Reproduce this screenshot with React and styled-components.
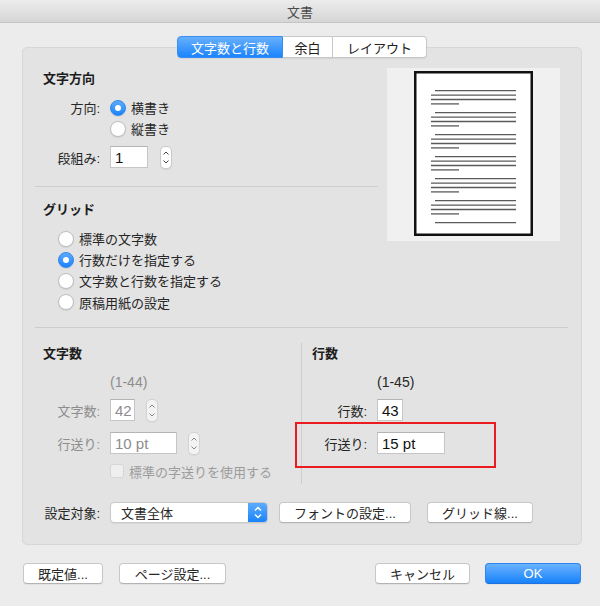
import React from "react";
import styled, { createGlobalStyle } from "styled-components";

const GlobalStyle = createGlobalStyle`
  html, body {
    margin: 0;
    padding: 0;
    background: #ececec;
  }
  body {
    font-family: "Liberation Sans", "Noto Sans CJK JP", sans-serif;
    font-size: 13px;
    color: #262626;
  }
`;

const Window = styled.div`
  width: 600px;
  height: 606px;
  background: #ececec;
  overflow: hidden;
  display: flex;
  flex-direction: column;
`;

const TitleBar = styled.div`
  height: 22px;
  border-bottom: 1px solid #c4c4c4;
  background: linear-gradient(#ececec, #d6d6d6);
  display: flex;
  align-items: center;
  justify-content: center;
  font-size: 13px;
  color: #4b4b4b;
`;

const Content = styled.div`
  padding: 13px 18px 0 22px;
  display: flex;
  flex-direction: column;
`;

const TabRow = styled.div`
  display: flex;
  justify-content: center;
  margin-bottom: -11px;
  position: relative;
  z-index: 1;
`;

const Tab = styled.div`
  width: ${(p) => p.w}px;
  height: 22px;
  box-sizing: border-box;
  display: flex;
  align-items: center;
  justify-content: center;
  font-size: 13px;
  color: ${(p) => (p.active ? "#fff" : "#222")};
  background: ${(p) => (p.active ? "linear-gradient(#68b0fc, #1a84fc)" : "#fff")};
  border: 1px solid ${(p) => (p.active ? "#3a8ef2" : "#c8c8c8")};
  border-left-width: ${(p) => (p.first ? 1 : 0)}px;
  border-radius: ${(p) => (p.first ? "4px 0 0 4px" : p.last ? "0 4px 4px 0" : "0")};
  box-shadow: 0 1px 1px rgba(0, 0, 0, 0.06);
`;

const Panel = styled.div`
  height: 498px;
  box-sizing: border-box;
  border: 1px solid #d7d7d7;
  border-radius: 5px;
  background: #e3e3e3;
  padding: 20px 13px 0 12px;
  display: flex;
  flex-direction: column;
`;

const TopGrid = styled.div`
  display: grid;
  grid-template-columns: 343px 173px;
  column-gap: 9px;
  align-items: start;
`;

const Column = styled.div`
  display: flex;
  flex-direction: column;
  padding-left: ${(p) => p.pl || 0}px;
  padding-bottom: ${(p) => p.pb || 0}px;
  position: relative;
  border-left: ${(p) => (p.divider ? "1px solid #cdcdcd" : "none")};
`;

const Heading = styled.div`
  font-weight: bold;
  line-height: 18px;
  height: 18px;
  margin-top: ${(p) => p.mt || 0}px;
  padding-left: ${(p) => p.pl || 0}px;
  color: #1c1c1c;
`;

const Row = styled.div`
  display: flex;
  align-items: center;
  height: ${(p) => p.h || 21}px;
  margin-top: ${(p) => p.mt || 0}px;
  padding-left: ${(p) => p.pl || 0}px;
`;

const Label = styled.span`
  width: ${(p) => p.w}px;
  flex-shrink: 0;
  text-align: right;
  margin-right: 10px;
  color: ${(p) => (p.disabled ? "#8d8d8d" : "#262626")};
  white-space: nowrap;
`;

const RangeText = styled.div`
  line-height: 18px;
  height: 18px;
  margin-top: 10px;
  padding-left: ${(p) => p.pl}px;
  font-size: 14px;
  color: ${(p) => (p.disabled ? "#8d8d8d" : "#262626")};
`;

const RadioDot = styled.span`
  width: 16px;
  height: 16px;
  box-sizing: border-box;
  border-radius: 50%;
  flex-shrink: 0;
  margin-right: 5px;
  display: flex;
  align-items: center;
  justify-content: center;
  background: ${(p) => (p.checked ? "linear-gradient(#5eacfc, #1b83fb)" : "#fff")};
  border: 1px solid ${(p) => (p.checked ? "#2f86ef" : "#bdbdbd")};
  box-shadow: 0 1px 1px rgba(0, 0, 0, 0.08);

  &::after {
    content: "";
    display: ${(p) => (p.checked ? "block" : "none")};
    width: 6px;
    height: 6px;
    border-radius: 50%;
    background: #fff;
  }
`;

const Separator = styled.div`
  height: 1px;
  background: #cdcdcd;
  margin-top: ${(p) => p.mt || 0}px;
`;

const Preview = styled.div`
  height: 173px;
  background: #f0f0f0;
  display: flex;
  justify-content: center;
  padding-top: 3px;
  box-sizing: border-box;
`;

const LowerGrid = styled.div`
  display: grid;
  grid-template-columns: 266px 1fr;
  margin-top: 15px;
`;

const TextInput = styled.div`
  width: ${(p) => p.w}px;
  height: 22px;
  box-sizing: border-box;
  background: #fff;
  border: 1px solid #c6c6c6;
  border-top-color: #b4b4b4;
  padding-left: 4px;
  display: flex;
  align-items: center;
  font-size: 15px;
  color: ${(p) => (p.disabled ? "#8d8d8d" : "#111")};
`;

const StepperBox = styled.div`
  width: 12px;
  height: 23px;
  margin-left: ${(p) => p.ml}px;
  box-sizing: border-box;
  border: 1px solid #c9c9c9;
  border-radius: 5px;
  background: #fff;
  display: flex;
  opacity: ${(p) => (p.disabled ? 0.6 : 1)};
  box-shadow: 0 1px 1px rgba(0, 0, 0, 0.06);
`;

const CheckBox = styled.span`
  width: 14px;
  height: 14px;
  box-sizing: border-box;
  border: 1px solid #d6d6d6;
  border-radius: 3px;
  background: #efefef;
  margin-right: 5px;
  flex-shrink: 0;
`;

const MutedText = styled.span`
  color: #9c9c9c;
`;

const Highlight = styled.div`
  position: absolute;
  left: -7px;
  top: 79px;
  width: 201px;
  height: 46px;
  box-sizing: border-box;
  border: 2px solid #ea1c1f;
`;

const Select = styled.div`
  width: 158px;
  height: 21px;
  box-sizing: border-box;
  border: 1px solid #c9c9c9;
  border-radius: 4px;
  background: #fff;
  display: flex;
  overflow: hidden;
  box-shadow: 0 1px 1px rgba(0, 0, 0, 0.06);
`;

const SelectValue = styled.span`
  flex: 1;
  padding-left: 10px;
  display: flex;
  align-items: center;
`;

const SelectArrow = styled.span`
  width: 19px;
  background: linear-gradient(#5eacfc, #1a83fb);
  display: flex;
  align-items: center;
  justify-content: center;
`;

const Button = styled.div`
  width: ${(p) => p.w}px;
  height: 21px;
  margin-left: ${(p) => p.ml || 0}px;
  box-sizing: border-box;
  border-radius: 4px;
  display: flex;
  align-items: center;
  justify-content: center;
  font-size: 13px;
  color: ${(p) => (p.primary ? "#fff" : "#262626")};
  background: ${(p) => (p.primary ? "linear-gradient(#6ab2fd, #1782fb)" : "#fff")};
  border: 1px solid ${(p) => (p.primary ? "#2d86f0" : "#c8c8c8")};
  border-bottom-color: ${(p) => (p.primary ? "#1d72de" : "#b3b3b3")};
  box-shadow: 0 1px 1px rgba(0, 0, 0, 0.05);
`;

const Footer = styled.div`
  display: flex;
  align-items: center;
  margin-top: 18px;
  padding: 0 1px 0 1px;
`;

const Spacer = styled.div`
  flex: 1;
`;

const Radio = ({ checked, children }) => (
  <>
    <RadioDot checked={checked} />
    <span>{children}</span>
  </>
);

const Stepper = ({ ml, disabled }) => (
  <StepperBox ml={ml} disabled={disabled}>
    <svg width="10" height="21" viewBox="0 0 10 21">
      <path d="M2.5 7.5 L5 5 L7.5 7.5" fill="none" stroke="#4a4a4a" strokeWidth="1" />
      <path d="M2.5 13.5 L5 16 L7.5 13.5" fill="none" stroke="#4a4a4a" strokeWidth="1" />
    </svg>
  </StepperBox>
);

const PageIcon = () => {
  const lines = [];
  for (let p = 0; p < 7; p++) {
    const y = 19.7 + 22 * p;
    lines.push([21, 102, y]);
    if (p < 6) {
      lines.push([17, 102, y + 4.4]);
      lines.push([17, 102, y + 8.8]);
      lines.push([17, 45, y + 13.2]);
    }
  }
  return (
    <svg width="119" height="165" viewBox="0 0 119 165">
      <rect x="1.25" y="1.25" width="116.5" height="162.5" fill="#fff" stroke="#111" strokeWidth="2.5" />
      {lines.map(([x1, x2, y], i) => (
        <line key={i} x1={x1} x2={x2} y1={y} y2={y} stroke="#5a5a5a" strokeWidth="1.3" />
      ))}
    </svg>
  );
};

export default function App() {
  return (
    <Window>
      <GlobalStyle />
      <TitleBar>文書</TitleBar>
      <Content>
        <TabRow>
          <Tab w={106} active first>文字数と行数</Tab>
          <Tab w={50}>余白</Tab>
          <Tab w={94} last>レイアウト</Tab>
        </TabRow>
        <Panel>
          <TopGrid>
            <Column>
              <Heading mt={2} pl={8}>文字方向</Heading>
              <Row mt={9} pl={8}>
                <Label w={57}>方向:</Label>
                <Radio checked>横書き</Radio>
              </Row>
              <Row pl={8}>
                <Label w={57} />
                <Radio>縦書き</Radio>
              </Row>
              <Row mt={7} h={22} pl={8}>
                <Label w={57}>段組み:</Label>
                <TextInput w={38}>1</TextInput>
                <Stepper ml={12} />
              </Row>
              <Separator mt={18} />
              <Heading mt={14} pl={8}>グリッド</Heading>
              <Row mt={9} pl={23}>
                <Radio>標準の文字数</Radio>
              </Row>
              <Row pl={23}>
                <Radio checked>行数だけを指定する</Radio>
              </Row>
              <Row pl={23}>
                <Radio>文字数と行数を指定する</Radio>
              </Row>
              <Row pl={23} h={22}>
                <Radio>原稿用紙の設定</Radio>
              </Row>
            </Column>
            <Preview>
              <PageIcon />
            </Preview>
          </TopGrid>
          <Separator mt={14} />
          <LowerGrid>
            <Column pl={8} pb={4}>
              <Heading mt={2}>文字数</Heading>
              <RangeText pl={67} disabled>(1-44)</RangeText>
              <Row mt={8} h={22}>
                <Label w={57} disabled>文字数:</Label>
                <TextInput w={25} disabled>42</TextInput>
                <Stepper ml={11} disabled />
              </Row>
              <Row mt={11} h={22}>
                <Label w={57} disabled>行送り:</Label>
                <TextInput w={67} disabled>10 pt</TextInput>
                <Stepper ml={11} disabled />
              </Row>
              <Row mt={8} h={18} pl={67}>
                <CheckBox />
                <MutedText>標準の字送りを使用する</MutedText>
              </Row>
            </Column>
            <Column pl={10} divider>
              <Heading mt={2}>行数</Heading>
              <RangeText pl={65}>(1-45)</RangeText>
              <Row mt={8} h={22}>
                <Label w={55}>行数:</Label>
                <TextInput w={26}>43</TextInput>
              </Row>
              <Row mt={11} h={22}>
                <Label w={55}>行送り:</Label>
                <TextInput w={68}>15 pt</TextInput>
              </Row>
              <Highlight />
            </Column>
          </LowerGrid>
          <Row mt={18} pl={8}>
            <Label w={57}>設定対象:</Label>
            <Select>
              <SelectValue>文書全体</SelectValue>
              <SelectArrow>
                <svg width="10" height="17" viewBox="0 0 10 17">
                  <path d="M2 6.5 L5 3.5 L8 6.5" fill="none" stroke="#fff" strokeWidth="1.5" />
                  <path d="M2 10.5 L5 13.5 L8 10.5" fill="none" stroke="#fff" strokeWidth="1.5" />
                </svg>
              </SelectArrow>
            </Select>
            <Button w={132} ml={11}>フォントの設定...</Button>
            <Button w={106} ml={16}>グリッド線...</Button>
          </Row>
        </Panel>
        <Footer>
          <Button w={80}>既定値...</Button>
          <Button w={107} ml={16}>ページ設定...</Button>
          <Spacer />
          <Button w={95}>キャンセル</Button>
          <Button w={96} ml={15} primary>OK</Button>
        </Footer>
      </Content>
    </Window>
  );
}
